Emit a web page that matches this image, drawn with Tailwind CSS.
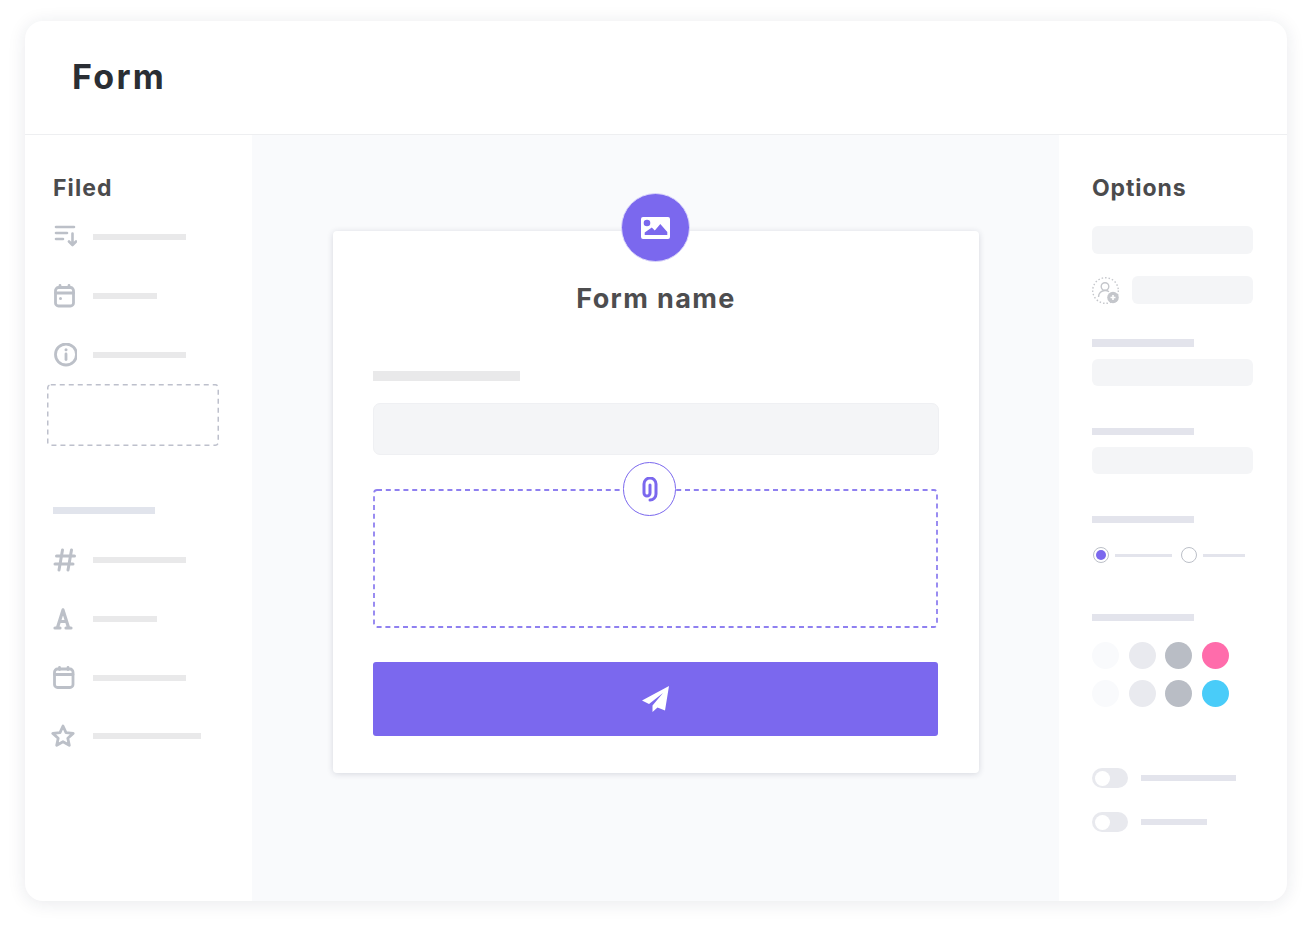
<!DOCTYPE html>
<html lang="en">

<head>
    <meta charset="UTF-8">
    <title>Form</title>
    <meta name="viewport" content="width=device-width,initial-scale=1" />
    <script src="https://cdn.jsdelivr.net/npm/@tailwindcss/browser@4"></script>
</head>

<body class="w-[1307px] h-[925px] overflow-hidden bg-white font-['Inter',sans-serif]">

<div class="ml-[25px] mt-[21px] w-[1262px] h-[880px] flex flex-col rounded-[18px] bg-white shadow-[0_2px_18px_rgba(30,40,70,0.1)] overflow-hidden">

    <!-- header -->
    <div class="h-[114px] shrink-0 flex items-center pl-[47px] border-b border-[#eeeff1]">
        <h1 class="text-[#2a2e34] text-[34px] font-bold tracking-[2.3px] leading-none -mt-[1px]">Form</h1>
    </div>

    <div class="flex flex-1 min-h-0">

        <!-- left column -->
        <div class="w-[227px] shrink-0 pl-[28px] pt-[40px]">
            <h2 class="text-[#4b4b4d] text-[23px] font-bold tracking-[1.1px] leading-[26px]">Filed</h2>
            <div class="mt-[24px] flex flex-col gap-[35px]">
                <div class="h-6 flex items-center">
                    <svg class="w-6 h-6 text-[#bcc0c8]" viewBox="0 0 24 24" fill="none" stroke="currentColor" stroke-width="2.6" stroke-linecap="round" stroke-linejoin="round"><path d="M3 2h18M3 8h11M3 14h7M19.500 8.500v10.500M16 16.500l3.500 3.500 3.500-3.500"/></svg>
                    <div class="ml-4 w-[93px] h-[6px] bg-[#e9e9ea]"></div>
                </div>
                <div class="h-6 flex items-center">
                    <svg class="w-6 h-6 text-[#bcc0c8]" viewBox="0 0 24 24" fill="none" stroke="currentColor" stroke-width="2.8" stroke-linecap="round" stroke-linejoin="round"><rect x="2.500" y="3.500" width="18" height="18.500" rx="3"/><path d="M2.500 9h18M7 1.500v2M16 1.500v2"/><circle cx="7.500" cy="14.500" r="1.500" fill="currentColor" stroke="none"/></svg>
                    <div class="ml-4 w-[64px] h-[6px] bg-[#e9e9ea]"></div>
                </div>
                <div class="h-6 flex items-center">
                    <svg class="w-6 h-6 text-[#bcc0c8]" viewBox="0 0 24 24" fill="none" stroke="currentColor" stroke-width="2.8" stroke-linecap="round"><circle cx="13" cy="11.500" r="10.500"/><path d="M13 11v5.500"/><circle cx="13" cy="6.800" r="1.500" fill="currentColor" stroke="none"/></svg>
                    <div class="ml-4 w-[93px] h-[6px] bg-[#e9e9ea]"></div>
                </div>
            </div>
            <svg class="-ml-[6px] mt-[17px]" width="172" height="62" viewBox="0 0 172 62" fill="none"><rect x="0.750" y="0.750" width="170.500" height="60.500" rx="3" stroke="#bdc0cc" stroke-width="1.500" stroke-dasharray="5 4"/></svg>
            <div class="mt-[61px] w-[102px] h-[7px] bg-[#e1e4ec]"></div>
            <div class="mt-[34px] flex flex-col gap-[35px]">
                <div class="h-6 flex items-center">
                    <svg class="w-6 h-6 text-[#bcc0c8]" viewBox="0 0 24 24" fill="none" stroke="currentColor" stroke-width="3" stroke-linecap="round"><path d="M9.500 2L6 22M18.500 2L15 22M3.500 8h18M2 16h18"/></svg>
                    <div class="ml-4 w-[93px] h-[6px] bg-[#e9e9ea]"></div>
                </div>
                <div class="h-6 flex items-center">
                    <svg class="w-6 h-6 text-[#bcc0c8]" viewBox="0 0 24 24" fill="none" stroke="currentColor" stroke-width="3.200" stroke-linecap="round" stroke-linejoin="round"><path d="M10 3L4.500 20.500M10 3l5.500 17.500M6.500 14.500h7M2 21h5M13 21h5"/></svg>
                    <div class="ml-4 w-[64px] h-[6px] bg-[#e9e9ea]"></div>
                </div>
                <div class="h-6 flex items-center">
                    <svg class="w-6 h-6 text-[#bcc0c8]" viewBox="0 0 24 24" fill="none" stroke="currentColor" stroke-width="2.800" stroke-linecap="round" stroke-linejoin="round"><rect x="1.500" y="3" width="18.500" height="18.500" rx="3"/><path d="M1.500 8.500h18.500M6.500 1.500v2M15 1.500v2"/></svg>
                    <div class="ml-4 w-[93px] h-[6px] bg-[#e9e9ea]"></div>
                </div>
                <div class="-ml-[2px] -mt-[1px] h-6 flex items-center">
                    <svg class="w-6 h-6 text-[#bcc0c8]" viewBox="0 0 24 24" fill="none" stroke="currentColor" stroke-width="2.800" stroke-linejoin="round"><path d="M12 2l3 6.600 7.200.8-5.400 4.800 1.500 7.100L12 17.700l-6.300 3.600 1.500-7.100L1.800 9.400 9 8.600z"/></svg>
                    <div class="ml-[18px] w-[108px] h-[6px] bg-[#e9e9ea]"></div>
                </div>
            </div>
        </div>

        <!-- center column -->
        <div class="w-[807px] shrink-0 bg-[#f9fafc] pl-[81px] pt-[96px]">
            <div class="relative w-[646px] h-[542px] rounded-[4px] bg-white shadow-[0_1px_6px_rgba(30,40,70,0.16)] px-[40px] pt-[53px]">
                <div class="absolute left-[288px] -top-[38px] w-[69px] h-[69px] rounded-full bg-[#7b68ee] border border-[#dcd8fa] flex items-center justify-center">
                    <svg class="w-[29px] h-[22px]" viewBox="0 0 29 22"><path fill="#fff" fill-rule="evenodd" d="M2 0h25a2 2 0 0 1 2 2v18a2 2 0 0 1-2 2H2a2 2 0 0 1-2-2V2a2 2 0 0 1 2-2zM6 2.700a3.300 3.300 0 1 0 0 6.600 3.300 3.300 0 0 0 0-6.600zM3.700 18h22.600v-3l-7-8-5.500 6.500-3-3-7.100 5z"/></svg>
                </div>
                <h2 class="text-center text-[#4d4d4f] text-[27px] font-bold leading-[30px] tracking-[1.4px]">Form name</h2>
                <div class="mt-[57px] w-[147px] h-[10px] bg-[#e9e9ea]"></div>
                <div class="mt-[22px] w-[566px] h-[52px] rounded-[7px] bg-[#f4f5f7] border border-[#eff0f3]"></div>
                <div class="relative mt-[34px] w-[565px] h-[139px]">
                    <svg class="block" width="565" height="139" viewBox="0 0 565 139" fill="none"><rect x="1" y="1" width="563" height="137" rx="3" stroke="#8f80f0" stroke-width="1.800" stroke-dasharray="5 3.800"/></svg>
                    <div class="absolute left-[250px] -top-[27px] w-[53px] h-[54px] rounded-full bg-white border-[1.500px] border-[#7b68ee] flex items-center justify-center">
                        <svg class="w-[16px] h-[25px]" viewBox="0 0 16 25" fill="none" stroke="#7b68ee" stroke-width="3" stroke-linecap="round"><path d="M8 8v8a3 3 0 0 1-6 0V7a6 6 0 0 1 12 0v10a6 6 0 0 1-6 6"/></svg>
                    </div>
                </div>
                <div class="mt-[34px] w-[565px] h-[74px] rounded-[3px] bg-[#7b68ee] flex items-center justify-center">
                    <svg class="w-[28px] h-[28px]" viewBox="0 0 28 28"><path fill="#fff" d="M27 1L0 15.500l7 3.500L21 8 10.500 20.500V27l5-4.500 7.500 3z"/></svg>
                </div>
            </div>
        </div>

        <!-- right column -->
        <div class="flex-1 pl-[33px] pt-[40px]">
            <h2 class="text-[#4b4b4d] text-[23px] font-bold tracking-[0.9px] leading-[26px]">Options</h2>
            <div class="mt-[25px] w-[161px] h-[28px] rounded-[6px] bg-[#f4f5f7]"></div>
            <div class="mt-[22px] flex items-center gap-[13px]">
                <svg class="w-[27px] h-[27px] text-[#c4c6cb]" viewBox="0 0 27 27" fill="none" stroke="currentColor"><circle cx="13.500" cy="13.500" r="12.800" stroke-width="1.400" stroke-dasharray="1.500 2"/><circle cx="13" cy="9.500" r="3.800" stroke-width="1.400"/><path d="M6.500 20c0-4 3-6.500 6.500-6.500 1.500 0 3 .4 4 1.200" stroke-width="1.400"/><circle cx="21" cy="20.500" r="5.800" fill="currentColor" stroke="none"/><path d="M21 18v5M18.500 20.500h5" stroke="#fff" stroke-width="1.600"/></svg>
                <div class="w-[121px] h-[28px] rounded-[6px] bg-[#f4f5f7]"></div>
            </div>
            <div class="mt-[35px] w-[102px] h-[8px] bg-[#e3e4ec]"></div>
            <div class="mt-[12px] w-[161px] h-[27px] rounded-[6px] bg-[#f4f5f7]"></div>
            <div class="mt-[42px] w-[102px] h-[7px] bg-[#e3e4ec]"></div>
            <div class="mt-[12px] w-[161px] h-[27px] rounded-[6px] bg-[#f4f5f7]"></div>
            <div class="mt-[42px] w-[102px] h-[7px] bg-[#e3e4ec]"></div>

            <div class="mt-[24px] flex items-center">
                <div class="ml-px w-4 h-4 rounded-full border-[1.500px] border-[#bcc0c8] flex items-center justify-center">
                    <div class="w-[10px] h-[10px] rounded-full bg-[#7b68ee]"></div>
                </div>
                <div class="ml-[6px] w-[57px] h-[3px] bg-[#e3e4ec]"></div>
                <div class="ml-[9px] w-4 h-4 rounded-full border-[1.500px] border-[#bcc0c8] bg-white"></div>
                <div class="ml-[6px] w-[42px] h-[3px] bg-[#e3e4ec]"></div>
            </div>

            <div class="mt-[51px] w-[102px] h-[7px] bg-[#e3e4ec]"></div>
            <div class="mt-[21px] grid grid-cols-[repeat(4,27px)] gap-x-[9.670px] gap-y-[11px]">
                <div class="h-[27px] rounded-full bg-[#f9fafc]"></div>
                <div class="h-[27px] rounded-full bg-[#e9eaef]"></div>
                <div class="h-[27px] rounded-full bg-[#b9bdc5]"></div>
                <div class="h-[27px] rounded-full bg-[#ff6cab]"></div>
                <div class="h-[27px] rounded-full bg-[#f9fafc]"></div>
                <div class="h-[27px] rounded-full bg-[#e9eaef]"></div>
                <div class="h-[27px] rounded-full bg-[#b9bdc5]"></div>
                <div class="h-[27px] rounded-full bg-[#49ccf9]"></div>
            </div>

            <div class="mt-[61px] flex flex-col gap-[24px]">
                <div class="flex items-center">
                    <div class="w-[36px] h-[20px] rounded-full bg-[#e8e9ee] flex items-center pl-[3px]">
                        <div class="w-[15px] h-[15px] rounded-full bg-white"></div>
                    </div>
                    <div class="ml-[13px] w-[95px] h-[6px] bg-[#e3e4ec]"></div>
                </div>
                <div class="flex items-center">
                    <div class="w-[36px] h-[20px] rounded-full bg-[#e8e9ee] flex items-center pl-[3px]">
                        <div class="w-[15px] h-[15px] rounded-full bg-white"></div>
                    </div>
                    <div class="ml-[13px] w-[66px] h-[6px] bg-[#e3e4ec]"></div>
                </div>
            </div>
        </div>

    </div>
</div>

</body>

</html>
